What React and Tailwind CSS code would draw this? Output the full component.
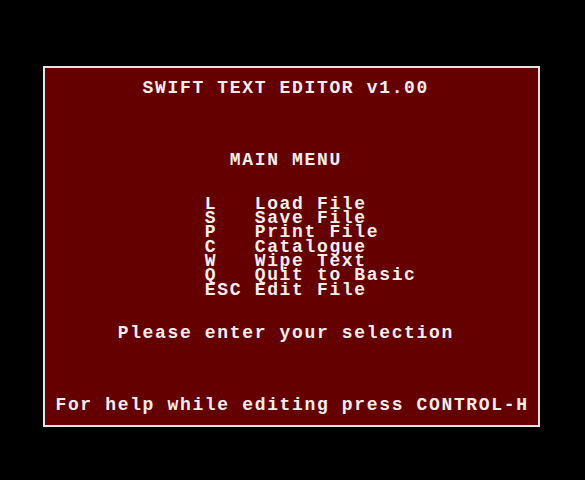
import React from 'react';

// 40 x 25 text screen, column 0 is left blank like the original
const rows = [
    '',
    '        SWIFT TEXT EDITOR v1.00',
    '',
    '',
    '',
    '',
    '               MAIN MENU',
    '',
    '',
    '             L   Load File',
    '             S   Save File',
    '             P   Print File',
    '             C   Catalogue',
    '             W   Wipe Text',
    '             Q   Quit to Basic',
    '             ESC Edit File',
    '',
    '',
    '      Please enter your selection',
    '',
    '',
    '',
    '',
    ' For help while editing press CONTROL-H',
    '',
];

export default function App() {
    return (
        <div className="w-full h-[480px] bg-black overflow-hidden pt-[66px] pl-[43px]">
            <div className="w-[497px] h-[361px] bg-[#640000] ring-2 ring-inset ring-[#e4e4e4] pt-[1px] font-['Liberation_Mono',monospace] font-bold text-[18px] tracking-[1.65px] text-[#f6eeee]">
                {rows.map((line, i) => (
                    <div key={i} className="h-[14.4px] leading-[14.4px] whitespace-pre">
                        {line}
                    </div>
                ))}
            </div>
        </div>
    );
}
